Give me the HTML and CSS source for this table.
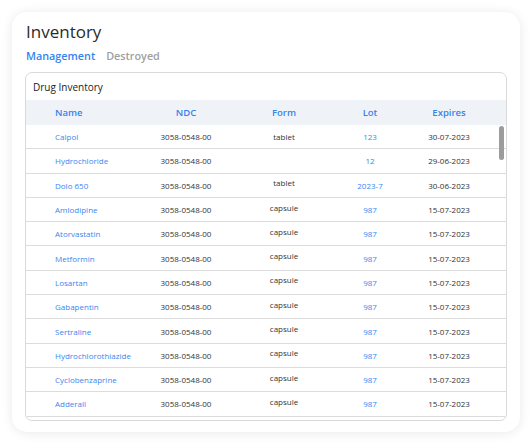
FILE: index.html
```html
<!DOCTYPE html>
<html>
<head>
<meta charset="utf-8">
<link rel="stylesheet" href="styles.css">
</head>
<body>
<div class="card">
  <h1 class="title">Inventory</h1>
  <div class="tabs">
    <span class="tab active">Management</span>
    <span class="tab">Destroyed</span>
  </div>
  <div class="box">
    <div class="box-title">Drug Inventory</div>
    <div class="row head">
      <div class="c name">Name</div>
      <div class="c">NDC</div>
      <div class="c">Form</div>
      <div class="c">Lot</div>
      <div class="c">Expires</div>
    </div>
    <div class="body">
      <div class="row"><div class="c name link">Calpol</div><div class="c">3058-0548-00</div><div class="c">tablet</div><div class="c link">123</div><div class="c">30-07-2023</div></div>
      <div class="row"><div class="c name link">Hydrochloride</div><div class="c">3058-0548-00</div><div class="c"></div><div class="c link">12</div><div class="c">29-06-2023</div></div>
      <div class="row"><div class="c name link">Dolo 650</div><div class="c">3058-0548-00</div><div class="c up">tablet</div><div class="c link">2023-7</div><div class="c">30-06-2023</div></div>
      <div class="row"><div class="c name link">Amlodipine</div><div class="c">3058-0548-00</div><div class="c up">capsule</div><div class="c link">987</div><div class="c">15-07-2023</div></div>
      <div class="row"><div class="c name link">Atorvastatin</div><div class="c">3058-0548-00</div><div class="c up">capsule</div><div class="c link">987</div><div class="c">15-07-2023</div></div>
      <div class="row"><div class="c name link">Metformin</div><div class="c">3058-0548-00</div><div class="c up">capsule</div><div class="c link">987</div><div class="c">15-07-2023</div></div>
      <div class="row"><div class="c name link">Losartan</div><div class="c">3058-0548-00</div><div class="c up">capsule</div><div class="c link">987</div><div class="c">15-07-2023</div></div>
      <div class="row"><div class="c name link">Gabapentin</div><div class="c">3058-0548-00</div><div class="c up">capsule</div><div class="c link">987</div><div class="c">15-07-2023</div></div>
      <div class="row"><div class="c name link">Sertraline</div><div class="c">3058-0548-00</div><div class="c up">capsule</div><div class="c link">987</div><div class="c">15-07-2023</div></div>
      <div class="row"><div class="c name link">Hydrochlorothiazide</div><div class="c">3058-0548-00</div><div class="c up">capsule</div><div class="c link">987</div><div class="c">15-07-2023</div></div>
      <div class="row"><div class="c name link">Cyclobenzaprine</div><div class="c">3058-0548-00</div><div class="c up">capsule</div><div class="c link">987</div><div class="c">15-07-2023</div></div>
      <div class="row"><div class="c name link">Adderall</div><div class="c">3058-0548-00</div><div class="c up">capsule</div><div class="c link">987</div><div class="c">15-07-2023</div></div>
      <div class="thumb"></div>
    </div>
  </div>
</div>
</body>
</html>
```

FILE: styles.css
```css
* { box-sizing: border-box; }
html, body { margin: 0; padding: 0; background: #ffffff; }
body {
  font-family: "Open Sans", "Noto Sans", sans-serif;
  color: #333;
  width: 532px;
  height: 444px;
  overflow: hidden;
}
.card {
  margin: 12px;
  width: 508px;
  height: 420px;
  border-radius: 15px;
  background: #fff;
  box-shadow: 0 1px 12px rgba(0, 0, 0, 0.09);
  padding: 9px 13px 11px 13px;
  display: flex;
  flex-direction: column;
}
.title {
  margin: 0 0 0 1px;
  font-size: 17px;
  line-height: 22px;
  font-weight: 500;
  color: #2b2b2b;
}
.tabs {
  display: flex;
  gap: 11px;
  margin: 5px 0 0 1px;
  font-size: 10.8px;
  line-height: 16px;
  font-weight: 600;
}
.tab { color: #a0a0a0; }
.tab.active { color: #3584ee; }
.box {
  margin-top: 8px;
  flex: 1;
  border: 1px solid #dadada;
  border-radius: 7px;
  overflow: hidden;
  display: flex;
  flex-direction: column;
}
.box-title {
  height: 27px;
  padding-left: 7px;
  display: flex;
  align-items: center;
  font-size: 10px;
  font-weight: 500;
  color: #222;
}
.row {
  display: grid;
  grid-template-columns: 120px 80px 116px 56px 102px;
  height: 24.3px;
  border-bottom: 1px solid #dcdcdc;
  align-items: center;
  font-size: 8px;
  color: #333;
}
.row.head {
  height: 25px;
  border-bottom: none;
  background: #eff3f7;
  font-size: 9.5px;
  font-weight: 600;
  color: #3584ee;
}
.c { text-align: center; white-space: nowrap; }
.c.name { text-align: left; padding-left: 29px; }
.c.up { position: relative; top: -2.5px; }
.link { color: #3a86f0; }
.body {
  position: relative;
  flex: 1;
  overflow: hidden;
}
.thumb {
  position: absolute;
  right: 2px;
  top: 1px;
  width: 5px;
  height: 34px;
  border-radius: 3px;
  background: #9c9c9c;
}
```
